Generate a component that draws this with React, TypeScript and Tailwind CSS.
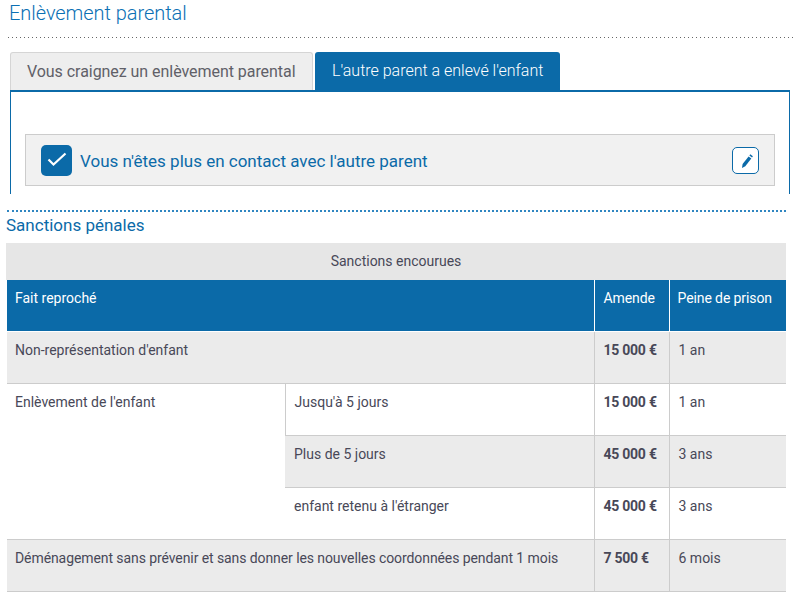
import React from "react";

const cell = "border border-[#cccccc] px-2 pt-2 pb-0 align-top text-left font-normal";
const sub = "border border-[#cccccc] pl-[9px] pr-2 pt-2 pb-0 align-top text-left font-normal";
const amount = "border border-[#cccccc] pl-[9px] pr-1 pt-2 pb-0 align-top text-left font-bold tracking-[-0.25px]";
const last = "border border-[#cccccc] border-r-0 pl-[9px] pr-2 pt-2 pb-0 align-top text-left font-normal";

export default function App() {
  return (
    <div className="w-[799px] h-[600px] overflow-hidden bg-white text-[14px] text-[#484858]" style={{ fontFamily: "Roboto, sans-serif" }}>
      <div className="pl-[9px] h-[37px] text-[20px] leading-[26px] font-light text-[#0b70b4] tracking-[-0.05px]">Enlèvement parental</div>
      <div className="ml-2 w-[787px] h-px bg-[repeating-linear-gradient(90deg,#666666_0,#666666_1.5px,transparent_1.5px,transparent_4px)]" />
      <div className="ml-[10px] w-[780px] mt-[14px]">
        <div className="flex gap-[2px] h-[38px]">
          <div className="w-[303px] h-[38px] pl-4 leading-[38px] text-[16px] font-normal text-[#606068] bg-[#eeeeee] border border-b-0 border-[#d5d5d5] rounded-t-[3px] tracking-[-0.05px]">Vous craignez un enlèvement parental</div>
          <div className="w-[245px] h-[38px] pl-[17px] leading-[38px] text-[16px] font-light text-white bg-[#0b6aa8] rounded-t-[3px]">L'autre parent a enlevé l'enfant</div>
        </div>
        <div className="h-[104px] border-t-2 border-x border-[#0b6aa8] border-b-0 px-[14px] pt-[42px]">
          <div className="h-[52px] bg-[#f1f1f1] border border-[#cccccc] pl-[15px] pr-[15px] flex items-center">
            <div className="w-[31px] h-[31px] rounded-[5px] bg-[#0b6aa8] shrink-0">
              <svg width="31" height="31" viewBox="0 0 31 31" fill="none"><path d="M7.5 14.5 L12.5 19.5 L24.5 8.5" stroke="#fff" strokeWidth="2.2" /></svg>
            </div>
            <div className="ml-2 flex-1 text-[17px] leading-[26px] pt-[2px] font-[450] text-[#0b6aa8]">Vous n'êtes plus en contact avec l'autre parent</div>
            <div className="w-[27px] h-[27px] rounded-[5px] border border-[#0b6aa8] bg-white">
              <svg width="25" height="25" viewBox="0 0 25 25" fill="none"><path d="M9 20 L9.6 16 L15.6 8.4 L18.3 10.5 L12.3 18.2 Z" fill="#0b6aa8" /><path d="M16.4 7.4 L17.3 6.2 L19.9 8.3 L19 9.5 Z" fill="#0b6aa8" /></svg>
            </div>
          </div>
        </div>
      </div>
      <div className="ml-[7px] mt-[16px] w-[779px] border-t-2 border-dotted border-[#2f86c1]" />
      <div className="pl-[6px] mt-[3px] h-[21px] text-[17px] leading-[21px] text-[#0b6aa8]">Sanctions pénales</div>
      <div className="mt-[7px] ml-[6px] w-[780px]">
        <div className="h-[37px] bg-[#e6e6e6] text-center leading-[36px]">Sanctions encourues</div>
        <table className="ml-[1px] w-[779px] table-fixed border-collapse leading-[20px]">
          <colgroup>
            <col className="w-[278px]" />
            <col className="w-[309px]" />
            <col className="w-[75px]" />
            <col className="w-[117px]" />
          </colgroup>
          <thead>
            <tr className="h-[51px] bg-[#0b6aa8] text-white">
              <th colSpan={2} className="px-2 pt-[8px] align-top text-left font-normal border-r border-white">Fait reproché</th>
              <th className="pl-[9px] pr-1 pt-[8px] align-top text-left font-normal border-r border-white tracking-[-0.1px]">Amende</th>
              <th className="px-2 pt-[8px] align-top text-left font-normal tracking-[-0.1px]">Peine de prison</th>
            </tr>
          </thead>
          <tbody>
            <tr className="h-[52px] bg-[#ebebeb]">
              <td colSpan={2} className={cell + " border-l-0 border-t-white"}>Non-représentation d'enfant</td>
              <td className={amount + " border-t-white"}>15 000 €</td>
              <td className={last + " border-t-white"}>1 an</td>
            </tr>
            <tr className="h-[52px]">
              <td rowSpan={3} className={cell + " border-l-0 border-r-0 bg-white"}>Enlèvement de l'enfant</td>
              <td className={sub}>Jusqu'à 5 jours</td>
              <td className={amount}>15 000 €</td>
              <td className={last}>1 an</td>
            </tr>
            <tr className="h-[52px] bg-[#ebebeb]">
              <td className={sub + " border-l-0"}>Plus de 5 jours</td>
              <td className={amount}>45 000 €</td>
              <td className={last}>3 ans</td>
            </tr>
            <tr className="h-[52px]">
              <td className={sub + " border-l-0"}>enfant retenu à l'étranger</td>
              <td className={amount}>45 000 €</td>
              <td className={last}>3 ans</td>
            </tr>
            <tr className="h-[52px] bg-[#ebebeb]">
              <td colSpan={2} className={cell + " border-l-0 tracking-[-0.085px]"}>Déménagement sans prévenir et sans donner les nouvelles coordonnées pendant 1 mois</td>
              <td className={amount}>7 500 €</td>
              <td className={last}>6 mois</td>
            </tr>
          </tbody>
        </table>
      </div>
    </div>
  );
}
